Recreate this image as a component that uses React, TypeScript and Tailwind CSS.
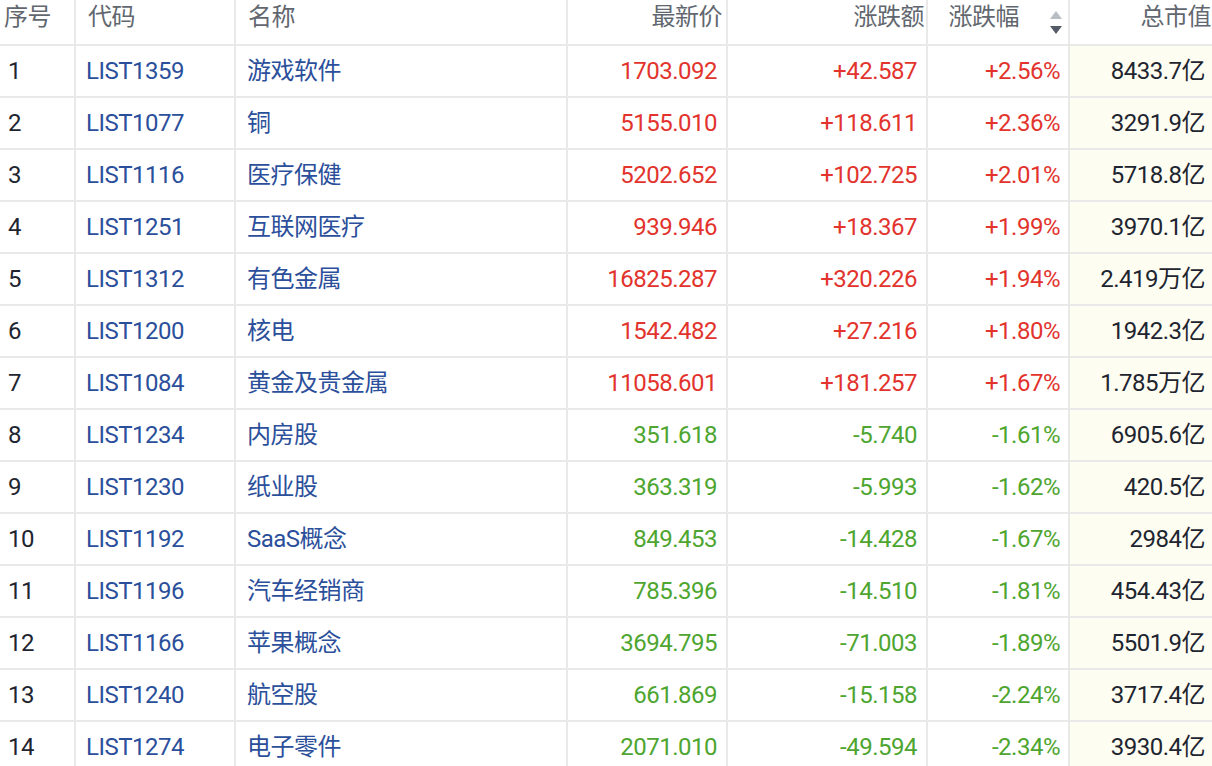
const rows = [
  ['1', 'LIST1359', '游戏软件', '1703.092', '+42.587', '+2.56%', '8433.7亿'],
  ['2', 'LIST1077', '铜', '5155.010', '+118.611', '+2.36%', '3291.9亿'],
  ['3', 'LIST1116', '医疗保健', '5202.652', '+102.725', '+2.01%', '5718.8亿'],
  ['4', 'LIST1251', '互联网医疗', '939.946', '+18.367', '+1.99%', '3970.1亿'],
  ['5', 'LIST1312', '有色金属', '16825.287', '+320.226', '+1.94%', '2.419万亿'],
  ['6', 'LIST1200', '核电', '1542.482', '+27.216', '+1.80%', '1942.3亿'],
  ['7', 'LIST1084', '黄金及贵金属', '11058.601', '+181.257', '+1.67%', '1.785万亿'],
  ['8', 'LIST1234', '内房股', '351.618', '-5.740', '-1.61%', '6905.6亿'],
  ['9', 'LIST1230', '纸业股', '363.319', '-5.993', '-1.62%', '420.5亿'],
  ['10', 'LIST1192', 'SaaS概念', '849.453', '-14.428', '-1.67%', '2984亿'],
  ['11', 'LIST1196', '汽车经销商', '785.396', '-14.510', '-1.81%', '454.43亿'],
  ['12', 'LIST1166', '苹果概念', '3694.795', '-71.003', '-1.89%', '5501.9亿'],
  ['13', 'LIST1240', '航空股', '661.869', '-15.158', '-2.24%', '3717.4亿'],
  ['14', 'LIST1274', '电子零件', '2071.010', '-49.594', '-2.34%', '3930.4亿'],
]

const font = { fontFamily: 'Roboto, "Noto Sans CJK SC", sans-serif' }

export default function App() {
  return (
    <div className="h-screen w-full overflow-hidden bg-white text-[24px] leading-none tracking-[-0.5px]" style={font}>
      {/* header */}
      <div className="flex h-[46px] border-b-2 border-[#e9e9e9] text-[#62676f]">
        <div className="flex w-[76px] items-center border-r-2 border-[#e9e9e9] pb-[10px] pl-[4px]">序号</div>
        <div className="flex w-[160px] items-center border-r-2 border-[#e9e9e9] pb-[10px] pl-[12px]">代码</div>
        <div className="flex w-[332px] items-center border-r-2 border-[#e9e9e9] pb-[10px] pl-[12px]">名称</div>
        <div className="flex w-[160px] items-center justify-end border-r-2 border-[#e9e9e9] pb-[10px] pr-[4px]">最新价</div>
        <div className="flex w-[200px] items-center justify-end border-r-2 border-[#e9e9e9] pb-[10px] pr-[2px]">涨跌额</div>
        <div className="flex w-[142px] items-center justify-end border-r-2 border-[#e9e9e9] pb-[10px] pr-[6px]">
          <span>涨跌幅</span>
          <span className="ml-[31px] mt-[10px] flex flex-col gap-[7px]">
            <svg width="12" height="8" viewBox="0 0 12 8"><path d="M6 0 L12 8 L0 8 Z" fill="#b9bdc4" /></svg>
            <svg width="12" height="8" viewBox="0 0 12 8"><path d="M0 0 L12 0 L6 8 Z" fill="#545b66" /></svg>
          </span>
        </div>
        <div className="flex flex-1 items-center justify-end whitespace-nowrap pb-[10px] pr-[1px]">总市值</div>
      </div>
      {/* body */}
      {rows.map((r) => {
        const up = r[4].startsWith('+')
        const c = up ? 'text-[#e2332d]' : 'text-[#4ea52f]'
        return (
          <div key={r[0]} className="flex h-[52px] border-b-2 border-[#e9e9e9]">
            <div className="flex w-[76px] items-center border-r-2 border-[#e9e9e9] pl-[8px] text-[#1e2530]">{r[0]}</div>
            <div className="flex w-[160px] items-center border-r-2 border-[#e9e9e9] pl-[10px] text-[#2b4f9b]">{r[1]}</div>
            <div className="flex w-[332px] items-center border-r-2 border-[#e9e9e9] pl-[11px] text-[#2b4f9b]">{r[2]}</div>
            <div className={`flex w-[160px] items-center justify-end border-r-2 border-[#e9e9e9] pr-[9px] ${c}`}>{r[3]}</div>
            <div className={`flex w-[200px] items-center justify-end border-r-2 border-[#e9e9e9] pr-[9px] ${c}`}>{r[4]}</div>
            <div className={`flex w-[142px] items-center justify-end border-r-2 border-[#e9e9e9] pr-[8px] ${c}`}>{r[5]}</div>
            <div className="flex flex-1 items-center justify-end whitespace-nowrap bg-[#fdfdf1] pr-[7px] text-[#1e2530]">{r[6]}</div>
          </div>
        )
      })}
    </div>
  )
}
